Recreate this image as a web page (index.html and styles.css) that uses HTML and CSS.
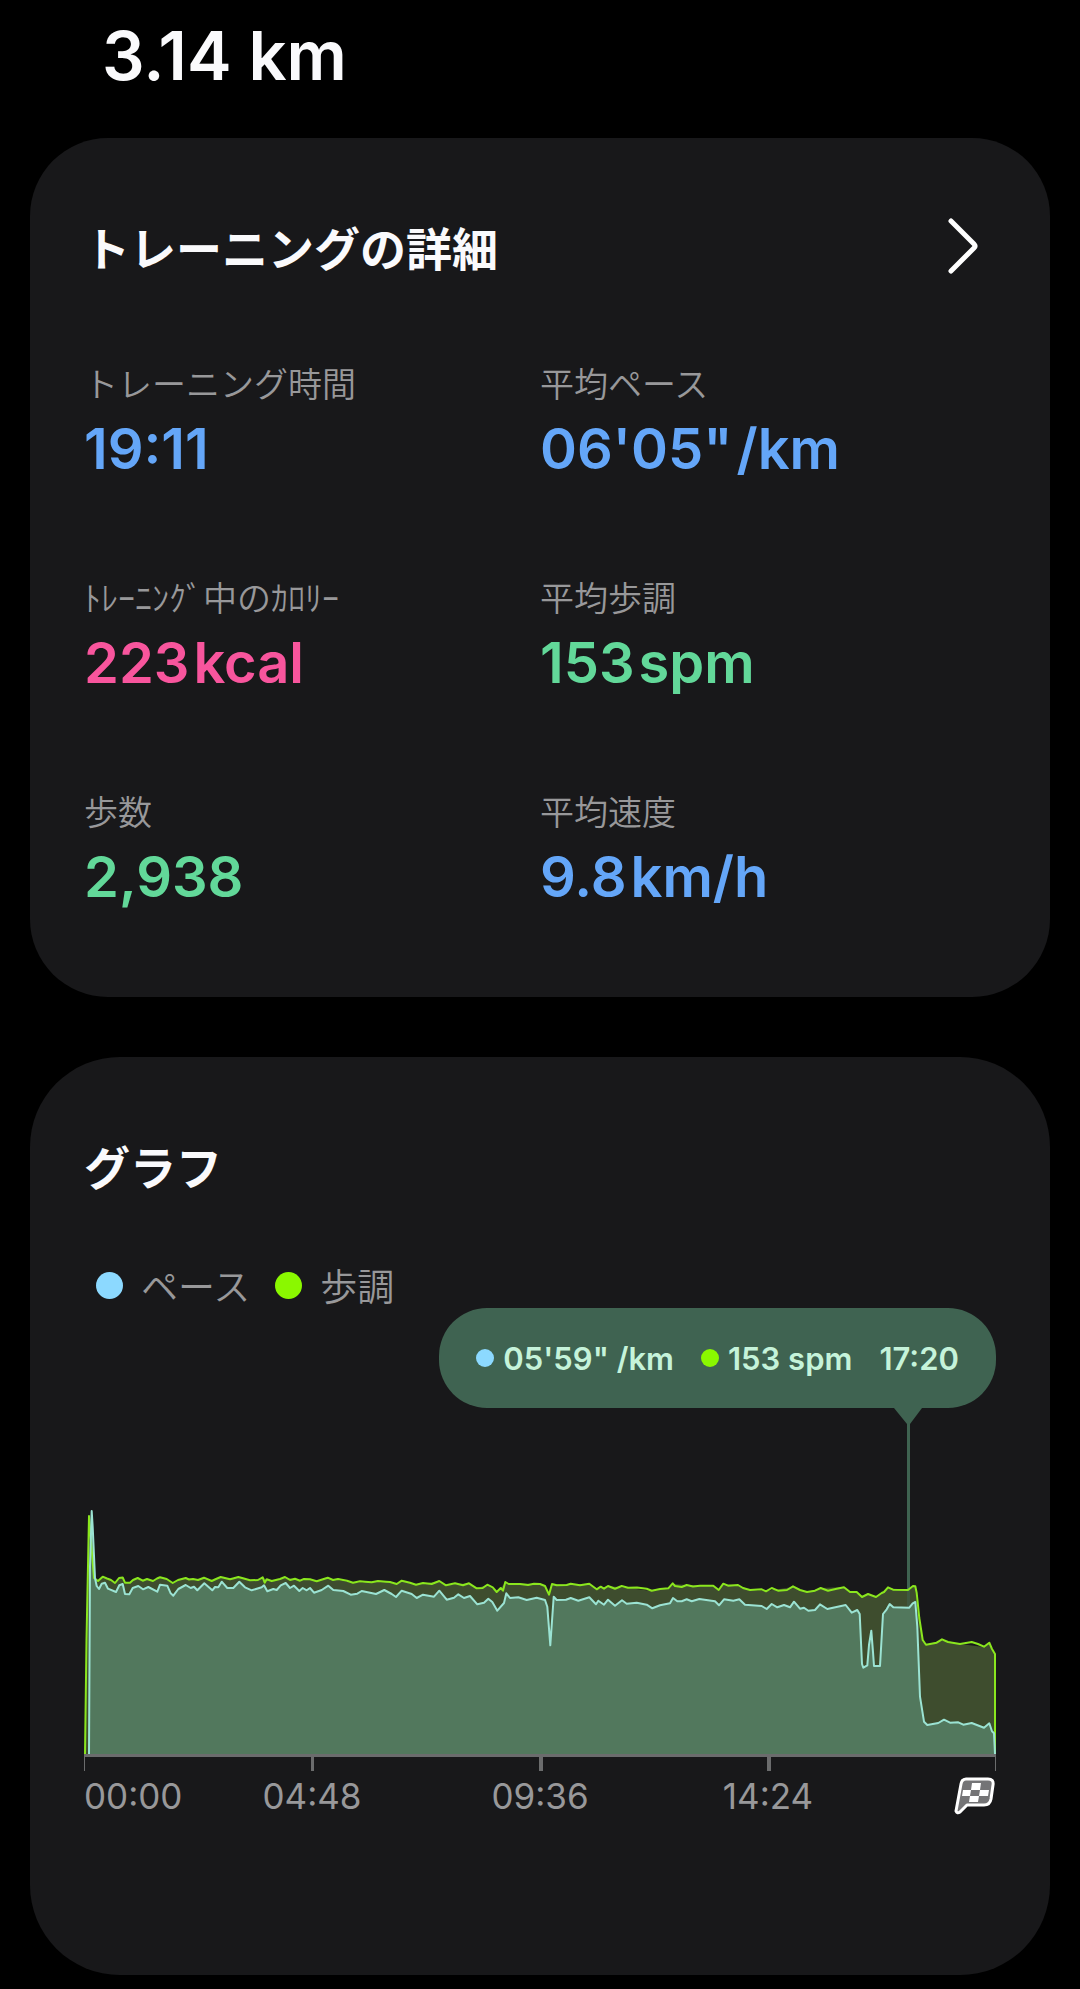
FILE: index.html
```html
<!DOCTYPE html>
<html lang="ja">
<head>
<meta charset="utf-8">
<meta name="viewport" content="width=device-width, initial-scale=1">
<title>トレーニングの詳細</title>
<link rel="stylesheet" href="styles.css">
</head>
<body>
<main class="page">
  <h1 class="distance">3.14 km</h1>

  <section class="card details">
    <header class="card-header">
      <h2 class="card-title">トレーニングの詳細</h2>
      <a class="more" href="#details" aria-label="詳細を表示">
        <svg class="chevron" viewBox="0 0 30 56" aria-hidden="true"><path d="M3 3 L26 26 Q28 28 26 30 L3 53"/></svg>
      </a>
    </header>
    <dl class="stats">
      <div class="stat">
        <dt class="stat-label">トレーニング時間</dt>
        <dd class="stat-value blue">19:11</dd>
      </div>
      <div class="stat">
        <dt class="stat-label">平均ペース</dt>
        <dd class="stat-value blue">06'05"<span class="unit">/km</span></dd>
      </div>
      <div class="stat">
        <dt class="stat-label">ﾄﾚｰﾆﾝｸﾞ中のｶﾛﾘｰ</dt>
        <dd class="stat-value pink">223<span class="unit">kcal</span></dd>
      </div>
      <div class="stat">
        <dt class="stat-label">平均歩調</dt>
        <dd class="stat-value green">153<span class="unit">spm</span></dd>
      </div>
      <div class="stat">
        <dt class="stat-label">歩数</dt>
        <dd class="stat-value green">2,938</dd>
      </div>
      <div class="stat">
        <dt class="stat-label">平均速度</dt>
        <dd class="stat-value blue">9.8<span class="unit">km/h</span></dd>
      </div>
    </dl>
  </section>

  <section class="card graph">
    <h2 class="card-title">グラフ</h2>
    <ul class="legend">
      <li class="legend-item"><span class="dot pace"></span>ペース</li>
      <li class="legend-item"><span class="dot cadence"></span>歩調</li>
    </ul>
    <div class="chart">
      <div class="bubble">
        <span class="reading"><span class="dot small pace"></span>05'59" /km</span>
        <span class="reading"><span class="dot small cadence"></span>153 spm</span>
        <span class="reading">17:20</span>
      </div>
      <svg class="plot" viewBox="84 1408 912 363" role="img" aria-label="ペースと歩調の推移">
        <path class="marker" d="M894 1408 H922 L910 1424 V1606 H907 V1424 Z"/>
        <path class="cadence-area" d="M85 1754 L89 1516 92 1553 94 1578 98 1581 103 1577 107 1578 111 1580 115 1583 119 1578 123 1578 125 1583 130 1583 133 1580 138 1578 143 1581 147 1579 153 1581 160 1577 167 1579 173 1583 178 1580 186 1578 198 1580 204 1578 212 1581 221 1577 230 1579 238 1577 250 1580 263 1578 272 1581 285 1577 300 1581 310 1579 317 1581 328 1578 353 1583 383 1581 396 1584 402 1581 416 1585 439 1581 446 1585 469 1583 477 1588 487 1585 497 1592 505 1583 540 1584 545 1586 549 1595 552 1584 589 1584 597 1589 608 1586 628 1588 652 1591 668 1588 673 1584 687 1585 713 1586 719 1590 723 1584 738 1585 750 1590 766 1591 793 1587 807 1592 821 1588 844 1587 850 1592 857 1592 862 1597 868 1594 876 1597 884 1592 888 1588 908 1590 915 1586 919 1618 923 1640 926 1645 942 1640 960 1644 984 1647 989 1643 995 1654 V1754 Z"/>
        <path class="marker faint" d="M907 1590 H910 V1608 H907 Z"/>
        <path class="pace-area" d="M89 1754 L90 1567 91.7 1511 92.7 1527 95 1578 96.7 1586 99 1589 101.7 1583.7 105 1582.7 108 1588.7 116 1592 119.3 1585.3 122.7 1584 125 1594 129.3 1594.3 132.7 1588 138.3 1586 143 1589.3 148.3 1587 157.3 1591.7 160 1584.7 167.3 1585.7 170.7 1593.3 173.3 1595.7 178.3 1589 185.7 1585 190.7 1588 194 1586.7 197.3 1590.3 204.3 1583.3 212.3 1590.3 215 1587 218.3 1587.3 221.7 1581.7 227.3 1588 233.3 1588 239.3 1581.7 245 1587.3 251.7 1590.3 261.7 1587.3 264 1585.3 267.3 1591.3 273.3 1589 276.7 1590 280.7 1585.3 285.7 1583 290 1588 294 1585.7 299.3 1591 302.7 1588 306.7 1590.3 310 1588 314 1592.7 321.7 1590 328.3 1585.7 333.3 1590 343.3 1591 350.7 1594.7 357.3 1593.7 361.7 1591 376 1594 384.3 1590 391.7 1594 396 1597 401.7 1590.7 411.7 1594 416.7 1598 423 1594.7 434 1596.7 439.3 1590.7 446.7 1599.7 454 1597.7 458.3 1594.3 464 1598 470 1596 477.3 1604.3 484 1602.7 488.3 1598.7 492.3 1602 497.3 1610.7 504 1603 506.3 1593.3 510 1598 518.3 1597.3 526.7 1600 536.7 1597.7 545 1600 547.3 1606.7 550.3 1645.3 553.7 1596.7 556.7 1600 566 1599.7 570.7 1598 578.3 1600.7 589.3 1597.3 596 1604.3 598.3 1600.7 604 1604.7 608 1599.7 615 1605.7 622 1600.3 626.7 1603.7 636.7 1602.7 646.7 1604.7 652.3 1608.3 660 1605.3 670 1603.3 673 1598 677.3 1601.3 681.7 1601.3 686.7 1599.3 691.7 1601.3 699.3 1599 715 1601.3 719 1605.3 724 1599.3 733.3 1600.7 739.3 1599.3 745 1604.7 761.7 1606 766.7 1609 771.7 1604 777.3 1607.3 784 1605 790 1607.3 794 1601.7 800 1608.7 804 1607.7 808.3 1610.7 815 1610 820 1604.3 827.3 1609 845.7 1605 851.7 1612.7 857.3 1610 859.7 1614 862 1664 863.3 1667.7 867.3 1665.3 869 1645 871.3 1630.7 873 1652 874 1666 880 1666 883 1614 886.7 1609.3 889.7 1604 893.3 1607.3 909.3 1607.7 912.7 1603.3 915.3 1602 917.3 1626.7 920 1696.7 924 1721.7 927.3 1725 938.3 1723 944 1719.7 950 1722.7 958.3 1722.3 963.3 1724.7 971.7 1723 984 1727.7 989.3 1723.3 992 1731.3 994 1733.3 995 1754 Z"/>
        <path class="cadence-line" d="M85 1754 L86.5 1640 89 1516 92 1553 94 1578 98 1581 102.7 1576.7 107 1578.5 111 1580 115 1583 119 1578 122.7 1577.5 125 1582.7 130 1582.7 133 1580 137.7 1578 142.7 1580.7 147 1579 153 1581 157 1578.5 160 1577.3 166.7 1579 172.7 1583 178 1580 185.7 1578 189 1579.5 193 1579 198 1580 204 1577.7 211.7 1581 216 1579 220.7 1577 230 1579.3 233 1578.5 238.3 1577 243 1578.3 250 1580.3 258 1580 262.7 1577.3 264.7 1582.7 266.7 1579.3 271.7 1581 280 1579 285 1577 290 1580 295 1578.7 300 1580.7 304 1579 310 1579.3 316.7 1581.3 327.7 1577.7 333 1580 338 1579 347 1580.7 353 1582.7 360 1581.3 365 1581.7 371.7 1582.3 378 1581 386 1581.7 390 1582 396.7 1584 401.7 1580.7 410 1582.7 416 1584.7 423 1583 431.7 1584 439.3 1581 446 1585.3 455 1583.3 463 1585.3 469 1583.3 476.7 1588.3 482.7 1588 487.3 1584.7 492.7 1587.3 496.7 1592 500.7 1588 503 1590.7 505.3 1582 508.7 1584 520 1584 528 1585 534 1583.8 540 1584 545 1586 549 1594.7 552 1584 556.7 1585.3 566.7 1585 570.7 1583.7 580 1585.3 589.3 1583.7 596.7 1589.3 600.7 1586.7 604 1588.7 608 1586 615 1588.7 621.7 1586 628 1587.7 637 1587.6 646.7 1588.7 651.7 1590.7 660 1589 668.3 1588.3 672.7 1583.3 675 1586 681.7 1587 686.7 1585 693 1586.4 700 1585.7 713.3 1585.7 718.7 1590 723.3 1583.7 728 1585.7 738 1585 743 1588 750 1590 761.7 1589.3 766 1591.3 771.7 1588 778 1590.7 787 1590 793 1586.3 800 1590 807 1592 815 1590.7 820.7 1588 828 1590.7 836.7 1588.7 844 1587.3 850 1592 856.7 1592 862 1597 868 1594 876 1597 881.7 1593 884 1592 888 1587.3 893 1589.7 908 1590 913 1586 915.3 1586.3 916.7 1593 919.3 1618 922.7 1640 926 1644.7 936.7 1642.7 942 1639.3 948 1642 960 1644 971.7 1642 978 1644 984 1646.7 989.3 1642.7 992 1649 995 1654 V1754"/>
        <path class="pace-line" d="M89 1754 L90 1567 91.7 1511 92.7 1527 95 1578 96.7 1586 99 1589 101.7 1583.7 105 1582.7 108 1588.7 116 1592 119.3 1585.3 122.7 1584 125 1594 129.3 1594.3 132.7 1588 138.3 1586 143 1589.3 148.3 1587 157.3 1591.7 160 1584.7 167.3 1585.7 170.7 1593.3 173.3 1595.7 178.3 1589 185.7 1585 190.7 1588 194 1586.7 197.3 1590.3 204.3 1583.3 212.3 1590.3 215 1587 218.3 1587.3 221.7 1581.7 227.3 1588 233.3 1588 239.3 1581.7 245 1587.3 251.7 1590.3 261.7 1587.3 264 1585.3 267.3 1591.3 273.3 1589 276.7 1590 280.7 1585.3 285.7 1583 290 1588 294 1585.7 299.3 1591 302.7 1588 306.7 1590.3 310 1588 314 1592.7 321.7 1590 328.3 1585.7 333.3 1590 343.3 1591 350.7 1594.7 357.3 1593.7 361.7 1591 376 1594 384.3 1590 391.7 1594 396 1597 401.7 1590.7 411.7 1594 416.7 1598 423 1594.7 434 1596.7 439.3 1590.7 446.7 1599.7 454 1597.7 458.3 1594.3 464 1598 470 1596 477.3 1604.3 484 1602.7 488.3 1598.7 492.3 1602 497.3 1610.7 504 1603 506.3 1593.3 510 1598 518.3 1597.3 526.7 1600 536.7 1597.7 545 1600 547.3 1606.7 550.3 1645.3 553.7 1596.7 556.7 1600 566 1599.7 570.7 1598 578.3 1600.7 589.3 1597.3 596 1604.3 598.3 1600.7 604 1604.7 608 1599.7 615 1605.7 622 1600.3 626.7 1603.7 636.7 1602.7 646.7 1604.7 652.3 1608.3 660 1605.3 670 1603.3 673 1598 677.3 1601.3 681.7 1601.3 686.7 1599.3 691.7 1601.3 699.3 1599 715 1601.3 719 1605.3 724 1599.3 733.3 1600.7 739.3 1599.3 745 1604.7 761.7 1606 766.7 1609 771.7 1604 777.3 1607.3 784 1605 790 1607.3 794 1601.7 800 1608.7 804 1607.7 808.3 1610.7 815 1610 820 1604.3 827.3 1609 845.7 1605 851.7 1612.7 857.3 1610 859.7 1614 862 1664 863.3 1667.7 867.3 1665.3 869 1645 871.3 1630.7 873 1652 874 1666 880 1666 883 1614 886.7 1609.3 889.7 1604 893.3 1607.3 909.3 1607.7 912.7 1603.3 915.3 1602 917.3 1626.7 920 1696.7 924 1721.7 927.3 1725 938.3 1723 944 1719.7 950 1722.7 958.3 1722.3 963.3 1724.7 971.7 1723 984 1727.7 989.3 1723.3 992 1731.3 994 1733.3 995 1754"/>
        <path class="axis" d="M84 1754 H996 V1771 H995 V1757 H771 V1771 H767 V1757 H543 V1771 H539 V1757 H314 V1771 H311 V1757 H85 V1771 H84 Z"/>
      </svg>
      <div class="times">
        <span class="time">00:00</span>
        <span class="time">04:48</span>
        <span class="time">09:36</span>
        <span class="time">14:24</span>
        <svg class="flag" viewBox="0 0 42 38" role="img" aria-label="終了">
          <path class="flag-shape" d="M12 2 H34 Q40 2 39 8 L37 22 Q36 28 30 28 H13 L6 35 Q3 37 2 34 L7 7 Q8 2 12 2 Z"/>
          <path class="flag-check" d="M18 6 h9 l-1 7 h9 l-1 6 h-9 l-1 6 h-9 l1 -6 h-8 l1 -6 h8 Z"/>
          <path class="flag-shape-fill" d="M17 13 h9 l-1 6 h-9 Z"/>
        </svg>
      </div>
    </div>
  </section>
</main>
</body>
</html>
```
FILE: styles.css
```css
* {
  box-sizing: border-box;
}

body {
  margin: 0;
  background: #000;
  color: #fafafc;
  font-family: Inter, "Noto Sans CJK JP", sans-serif;
}

h1, h2, dl, dd, ul {
  margin: 0;
  padding: 0;
}

.page {
  display: flex;
  flex-direction: column;
  padding: 16px 30px 14px;
}

.distance {
  padding-left: 72px;
  margin-bottom: 42px;
  font-size: 67px;
  line-height: 80px;
  font-weight: 600;
}

.card {
  padding: 78px 54px 0;
  background: #18181a;
}

.details {
  padding-bottom: 86px;
  margin-bottom: 60px;
  border-radius: 78px;
}

.graph {
  padding-bottom: 157px;
  border-radius: 90px;
}

.card-header {
  display: flex;
  align-items: center;
  justify-content: space-between;
  margin-bottom: 85px;
}

.card-title {
  font-family: "Noto Sans CJK JP", sans-serif;
  font-size: 46px;
  line-height: 60px;
  font-weight: 700;
}

.more {
  display: flex;
  padding-right: 18px;
}

.chevron {
  width: 30px;
  height: 56px;
  fill: none;
  stroke: #fff;
  stroke-width: 5;
  stroke-linecap: round;
  stroke-linejoin: round;
}

.stats {
  display: grid;
  grid-template-columns: 1fr 1fr;
  row-gap: 92px;
}

.stat {
  display: flex;
  flex-direction: column;
  gap: 10px;
}

.stat-label {
  font-family: "Noto Sans CJK JP", sans-serif;
  font-size: 34px;
  line-height: 44px;
  font-weight: 350;
  color: #98989a;
}

.stat-value {
  font-size: 56px;
  line-height: 68px;
  font-weight: 600;
}

.unit {
  margin-left: 4px;
}

.blue { color: #64a6f8; }
.pink { color: #f8559d; }
.green { color: #62d899; }

.legend {
  display: flex;
  gap: 25px;
  margin-top: 67px;
  padding-left: 12px;
  list-style: none;
}

.legend-item {
  display: flex;
  align-items: center;
  gap: 18px;
  font-family: "Noto Sans CJK JP", sans-serif;
  font-size: 37px;
  line-height: 46px;
  font-weight: 350;
  color: #98989a;
}

.dot {
  width: 27px;
  height: 27px;
  border-radius: 50%;
}

.dot.small {
  width: 18px;
  height: 18px;
}

.dot.pace { background: #8cd9ff; }
.dot.cadence { background: #8af800; }

.chart {
  display: flex;
  flex-direction: column;
}

.bubble {
  display: flex;
  align-items: center;
  align-self: flex-end;
  gap: 27px;
  height: 100px;
  padding: 0 37px;
  border-radius: 48px;
  background: #3f6351;
  color: #c5f3da;
  font-size: 31px;
  font-weight: 600;
  white-space: pre;
}

.reading {
  display: flex;
  align-items: center;
  gap: 9px;
}

.plot {
  display: block;
  width: 100%;
}

.marker { fill: #3f6351; }
.marker.faint { opacity: 0.5; }
.cadence-area { fill: #3e4d2e; }
.pace-area { fill: #52785d; }

.cadence-line,
.pace-line {
  fill: none;
  stroke-width: 2;
  stroke-linejoin: round;
}

.cadence-line { stroke: #8ae61e; }
.pace-line { stroke: #9be3d3; }
.axis { fill: #6b6c6d; }

.times {
  display: grid;
  grid-template-columns: 1fr 2fr 2fr 2fr 1fr;
  align-items: center;
  justify-items: center;
  margin-top: 3px;
  font-size: 35px;
  line-height: 44px;
  color: #98989a;
}

.time:first-child {
  justify-self: start;
}

.flag {
  justify-self: end;
  width: 42px;
  height: 38px;
}

.flag-shape {
  fill: #747476;
  stroke: #fff;
  stroke-width: 3;
  stroke-linejoin: round;
}

.flag-check { fill: #fff; }
.flag-shape-fill { fill: #747476; }
```
